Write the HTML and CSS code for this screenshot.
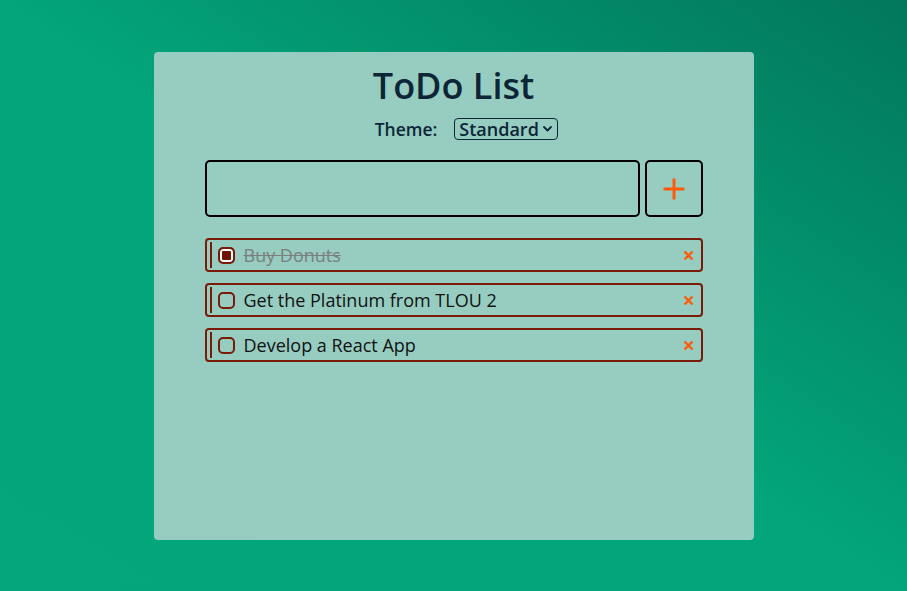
FILE: index.html
```html
<!DOCTYPE html>
<html lang="en">
<head>
<meta charset="utf-8">
<title>ToDo List</title>
<link rel="stylesheet" href="styles.css">
</head>
<body>
<main class="card">
  <h1 class="title">ToDo List</h1>
  <div class="theme-row">
    <label class="theme-label" for="theme">Theme:</label>
    <span class="select-wrap">
      <select id="theme" class="theme-select">
        <option>Standard</option>
        <option>Light</option>
        <option>Darker</option>
      </select>
      <svg class="chevron" width="9" height="6" viewBox="0 0 9 6"><path d="M1 1L4.5 4.5L8 1" stroke="#0d2637" stroke-width="1.8" fill="none" stroke-linecap="round" stroke-linejoin="round"/></svg>
    </span>
  </div>
  <form class="add-row">
    <input class="add-input" type="text" aria-label="New todo">
    <button class="add-btn" type="button" aria-label="Add">
      <svg width="24" height="24" viewBox="0 0 24 24"><path d="M12 1.5V22.5M1.5 12H22.5" stroke="#ff5b0a" stroke-width="3" fill="none"/></svg>
    </button>
  </form>
  <ul class="list">
    <li class="item">
      <span class="bar"></span>
      <span class="check checked"></span>
      <span class="text done">Buy Donuts</span>
      <span class="del"><svg width="11" height="11" viewBox="0 0 11 11"><path d="M1.5 1.5L9.5 9.5M9.5 1.5L1.5 9.5" stroke="#ff5b0a" stroke-width="2.4" fill="none"/></svg></span>
    </li>
    <li class="item">
      <span class="bar"></span>
      <span class="check"></span>
      <span class="text">Get the Platinum from TLOU 2</span>
      <span class="del"><svg width="11" height="11" viewBox="0 0 11 11"><path d="M1.5 1.5L9.5 9.5M9.5 1.5L1.5 9.5" stroke="#ff5b0a" stroke-width="2.4" fill="none"/></svg></span>
    </li>
    <li class="item">
      <span class="bar"></span>
      <span class="check"></span>
      <span class="text">Develop a React App</span>
      <span class="del"><svg width="11" height="11" viewBox="0 0 11 11"><path d="M1.5 1.5L9.5 9.5M9.5 1.5L1.5 9.5" stroke="#ff5b0a" stroke-width="2.4" fill="none"/></svg></span>
    </li>
  </ul>
</main>
</body>
</html>
```

FILE: styles.css
```css
html, body {
  margin: 0;
  padding: 0;
}
body {
  width: 907px;
  height: 591px;
  overflow: hidden;
  background: linear-gradient(to top right, #04a77b 0%, #03a57a 50%, #02775b 100%);
  font-family: "Open Sans", "Liberation Sans", sans-serif;
  color: #0d2637;
}
.card {
  box-sizing: border-box;
  width: 600px;
  height: 488px;
  margin: 52px auto 0;
  padding: 12px 51px 0;
  background: #96cdc0;
  border-radius: 4px;
  display: flex;
  flex-direction: column;
}
.title {
  margin: 0;
  font-size: 36px;
  line-height: 44px;
  font-weight: 600;
  text-align: center;
  color: #0d2637;
}
.theme-row {
  margin-top: 10px;
  height: 22px;
  padding-left: 26px;
  display: flex;
  justify-content: center;
  align-items: center;
  gap: 17px;
}
.theme-label {
  font-size: 17.5px;
  font-weight: 600;
  color: #0d2637;
}
.select-wrap {
  position: relative;
  display: flex;
}
.theme-select {
  box-sizing: border-box;
  height: 22px;
  width: 104px;
  margin: 0;
  -webkit-appearance: none;
  appearance: none;
  font-family: inherit;
  font-size: 18px;
  line-height: 20px;
  font-weight: 600;
  color: #0d2637;
  background: transparent;
  border: 1px solid #0d2637;
  border-radius: 4px;
  padding: 0 0 0 4px;
}
.chevron {
  position: absolute;
  right: 6px;
  top: 8px;
  pointer-events: none;
}
.add-row {
  margin: 20px 0 0;
  display: flex;
  gap: 5px;
  height: 57px;
}
.add-input {
  box-sizing: border-box;
  flex: 1;
  height: 57px;
  margin: 0;
  background: transparent;
  border: 2px solid #000;
  border-radius: 5px;
  font-family: inherit;
  font-size: 18px;
  padding: 0 10px;
}
.add-btn {
  box-sizing: border-box;
  width: 58px;
  height: 57px;
  margin: 0;
  padding: 0;
  background: transparent;
  border: 2px solid #000;
  border-radius: 5px;
  display: flex;
  align-items: center;
  justify-content: center;
}
.list {
  list-style: none;
  margin: 21px 0 0;
  padding: 0;
  display: flex;
  flex-direction: column;
  gap: 11px;
}
.item {
  box-sizing: border-box;
  height: 34px;
  border: 2px solid #7a1a08;
  border-radius: 4px;
  display: flex;
  align-items: center;
  padding: 0 7px 0 3px;
}
.bar {
  width: 2px;
  height: 26px;
  background: #7a1a08;
}
.check {
  box-sizing: border-box;
  width: 17px;
  height: 17px;
  margin-left: 6px;
  border: 2px solid #7a1a08;
  border-radius: 5px;
}
.check.checked {
  background: #6e1400;
  box-shadow: inset 0 0 0 2px #fff;
}
.text {
  flex: 1;
  margin-left: 9px;
  font-size: 18px;
  color: #111;
}
.text.done {
  color: #7a7f7d;
  text-decoration: line-through;
}
.del {
  display: flex;
  align-items: center;
}
```
